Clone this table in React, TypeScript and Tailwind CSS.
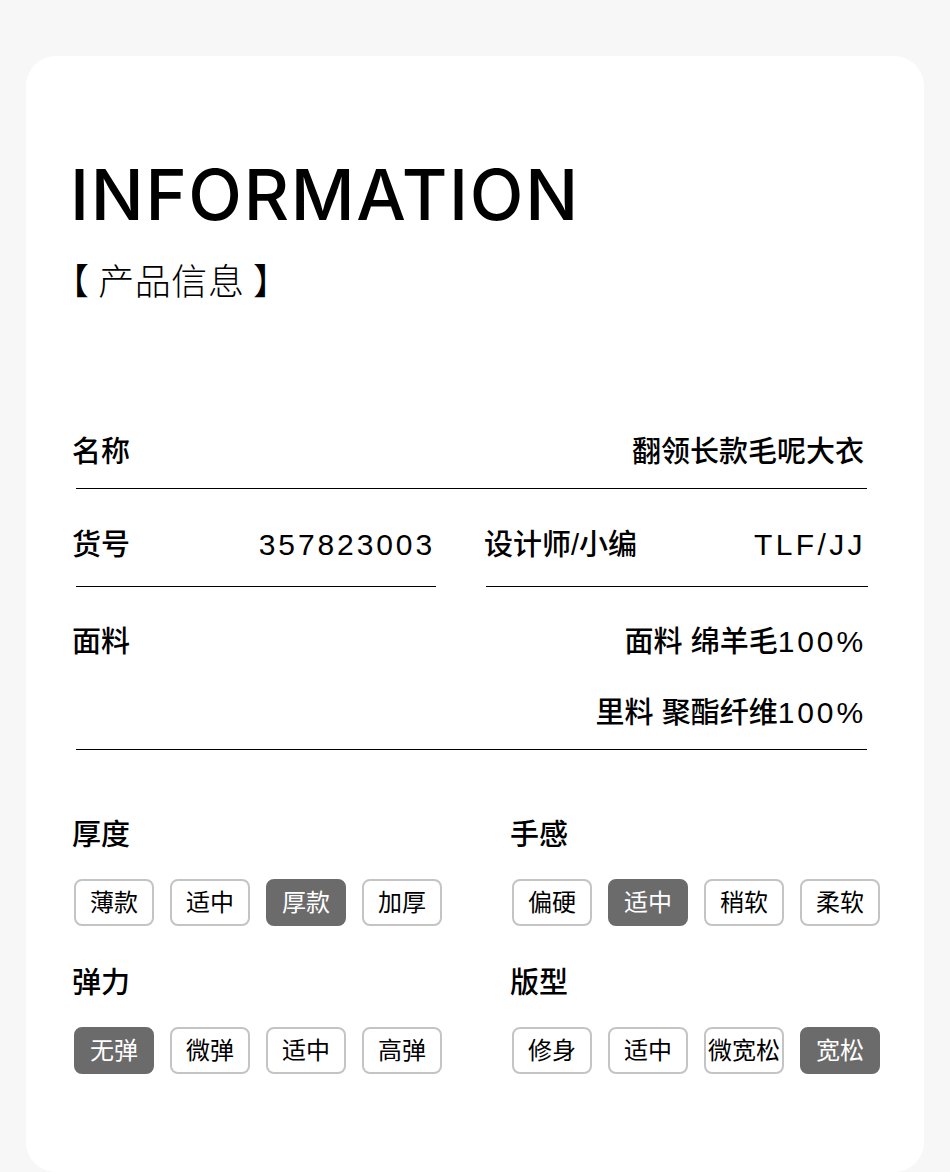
const FONT = "[font-family:'Liberation_Sans','Noto_Sans_CJK_SC',sans-serif]";

type Option = { label: string; active?: boolean };

const THICKNESS: Option[] = [
  { label: "薄款" },
  { label: "适中" },
  { label: "厚款", active: true },
  { label: "加厚" },
];
const FEEL: Option[] = [
  { label: "偏硬" },
  { label: "适中", active: true },
  { label: "稍软" },
  { label: "柔软" },
];
const STRETCH: Option[] = [
  { label: "无弹", active: true },
  { label: "微弹" },
  { label: "适中" },
  { label: "高弹" },
];
const FIT: Option[] = [
  { label: "修身" },
  { label: "适中" },
  { label: "微宽松" },
  { label: "宽松", active: true },
];

// latin bits are set a touch larger and spaced out
function Latin({ children }: { children: string }) {
  return <span className="text-[30px] font-normal tracking-[2.9px]">{children}</span>;
}

function Chips({ options }: { options: Option[] }) {
  return (
    <div className="flex gap-4 pl-[2px]">
      {options.map((o, i) => (
        <div
          key={i}
          className={
            o.active
              ? "flex h-[47px] w-[80px] items-center justify-center rounded-lg border-2 border-[#6b6b6b] bg-[#6b6b6b] text-[24px] leading-none text-white"
              : "flex h-[47px] w-[80px] items-center justify-center rounded-lg border-2 border-[#c4c4c4] bg-white text-[24px] leading-none text-black"
          }
        >
          {o.label}
        </div>
      ))}
    </div>
  );
}

function Attr({ title, options }: { title: string; options: Option[] }) {
  return (
    <div>
      <div className="h-[40px] text-[29px] font-medium leading-[40px]">{title}</div>
      <div className="mt-[24px]">
        <Chips options={options} />
      </div>
    </div>
  );
}

export default function App() {
  return (
    <div className={`min-h-[1172px] bg-[#f7f7f7] pt-[56px] pl-[26px] pr-[26px] text-black ${FONT}`}>
      <div className="h-[1116px] rounded-[30px] bg-white pl-[46px] pr-[58px] pt-[104px]">
        {/* header */}
        <h1 className="ml-[-2px] font-['Inter',sans-serif] text-[70px] font-medium leading-none tracking-[1.7px]">
          INFORMATION
        </h1>
        <div className="ml-[-19px] mt-[31px] text-[36px] font-light leading-none tracking-[0.6px] [font-family:'Noto_Sans_CJK_SC',sans-serif]">
          【 产品信息 】
        </div>

        {/* basic info */}
        <div className="mt-[135px] w-[794px] text-[29px] font-medium">
          <div className="flex h-[40px] items-center justify-between leading-[40px]">
            <span>名称</span>
            <span className="mr-[2px]">翻领长款毛呢大衣</span>
          </div>
          <div className="ml-[4px] mr-[-1px] mt-[16px] h-px bg-black" />

          <div className="mt-[36px] flex justify-between">
            <div className="w-[363px]">
              <div className="flex h-[40px] items-center justify-between leading-[40px]">
                <span>货号</span>
                <Latin>357823003</Latin>
              </div>
              <div className="ml-[4px] mr-[-1px] mt-[21px] h-px bg-black" />
            </div>
            <div className="w-[382px]">
              <div className="flex h-[40px] items-center justify-between leading-[40px]">
                <span>设计师/小编</span>
                <span className="text-[30px] font-normal tracking-[3.4px]">TLF/JJ</span>
              </div>
              <div className="ml-[2px] mr-[-2px] mt-[21px] h-px bg-black" />
            </div>
          </div>

          <div className="mt-[35px] flex justify-between">
            <span className="leading-[40px]">面料</span>
            <div className="flex flex-col items-end gap-[31px] leading-[40px]">
              <span>
                面料 绵羊毛<Latin>100%</Latin>
              </span>
              <span>
                里料 聚酯纤维<Latin>100%</Latin>
              </span>
            </div>
          </div>
          <div className="ml-[4px] mr-[-1px] mt-[16px] h-px bg-black" />
        </div>

        {/* attributes */}
        <div className="mt-[65px] grid grid-cols-[438px_1fr] gap-y-[37px]">
          <Attr title="厚度" options={THICKNESS} />
          <Attr title="手感" options={FEEL} />
          <Attr title="弹力" options={STRETCH} />
          <Attr title="版型" options={FIT} />
        </div>
      </div>
    </div>
  );
}
